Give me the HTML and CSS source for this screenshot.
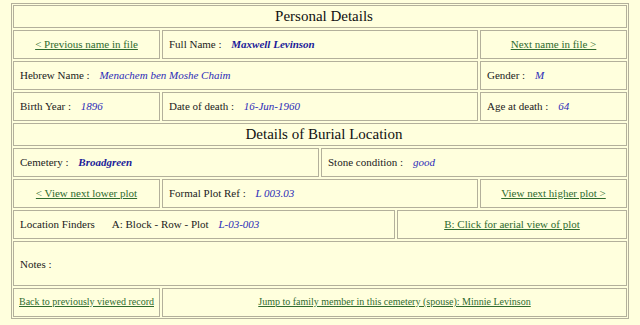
FILE: index.html
```html
<!DOCTYPE html>
<html>
<head>
    <title>Burial Record - Maxwell Levinson</title>
    <link rel="stylesheet" href="styles.css">
</head>
<body>
    <div class="record">
        <div class="row title-row">
            <div class="cell heading">Personal Details</div>
        </div>
        <div class="row">
            <div class="cell side center"><a href="#">&lt; Previous name in file</a></div>
            <div class="cell wide">Full Name : <span class="name">Maxwell Levinson</span></div>
            <div class="cell side-r center"><a href="#">Next name in file &gt;</a></div>
        </div>
        <div class="row">
            <div class="cell wide">Hebrew Name : <span class="value">Menachem ben Moshe Chaim</span></div>
            <div class="cell side-r">Gender : <span class="value">M</span></div>
        </div>
        <div class="row">
            <div class="cell side">Birth Year : <span class="value">1896</span></div>
            <div class="cell wide">Date of death : <span class="value">16-Jun-1960</span></div>
            <div class="cell side-r">Age at death : <span class="value">64</span></div>
        </div>
        <div class="row title-row">
            <div class="cell heading">Details of Burial Location</div>
        </div>
        <div class="row">
            <div class="cell half">Cemetery : <span class="name">Broadgreen</span></div>
            <div class="cell half">Stone condition : <span class="value">good</span></div>
        </div>
        <div class="row">
            <div class="cell side center"><a href="#">&lt; View next lower plot</a></div>
            <div class="cell wide">Formal Plot Ref : <span class="value">L 003.03</span></div>
            <div class="cell side-r center"><a href="#">View next higher plot &gt;</a></div>
        </div>
        <div class="row">
            <div class="cell finders">Location Finders <span class="spacer"></span> A: Block - Row - Plot <span class="value">L-03-003</span></div>
            <div class="cell wide center"><a href="#">B: Click for aerial view of plot</a></div>
        </div>
        <div class="row notes-row">
            <div class="cell wide">Notes :</div>
        </div>
        <div class="row last-row">
            <div class="cell side center"><a href="#">Back to previously viewed record</a></div>
            <div class="cell wide center"><a href="#">Jump to family member in this cemetery (spouse): Minnie Levinson</a></div>
        </div>
    </div>
</body>
</html>
```

FILE: styles.css
```css
* {
    margin: 0;
    padding: 0;
    box-sizing: border-box;
}

body {
    background: #ffffdd;
    font-family: "Liberation Serif", "Times New Roman", serif;
    font-size: 11px;
    color: #222222;
    padding: 3px 11px 0 11px;
}

.record {
    width: 618px;
    border: 1px solid #b3b09b;
    padding: 1px;
    display: flex;
    flex-direction: column;
    gap: 2px;
}

.row {
    display: flex;
    gap: 2px;
    height: 29px;
}

.title-row {
    height: 23px;
}

.notes-row {
    height: 45px;
}

.last-row {
    font-size: 10px;
}

.cell {
    border: 1px solid #b3b09b;
    padding: 0 6px 2px 6px;
    display: flex;
    align-items: center;
    white-space: pre;
}

.title-row .cell,
.notes-row .cell {
    padding-bottom: 0;
}

.heading {
    flex: 1;
    justify-content: center;
    font-size: 15px;
    color: #111111;
    padding-left: 14px;
}

.side {
    width: 147px;
}

.side-r {
    width: 147px;
}

.wide {
    flex: 1;
}

.half {
    flex: 1;
}

.finders {
    width: 382px;
}

.center {
    justify-content: center;
}

.value {
    font-style: italic;
    color: #2b2bb8;
    margin-left: 7px;
}

.name {
    font-style: italic;
    font-weight: bold;
    color: #1a1a99;
    margin-left: 7px;
}

.spacer {
    display: inline-block;
    width: 12px;
}

a {
    color: #2f6b2f;
}
```
